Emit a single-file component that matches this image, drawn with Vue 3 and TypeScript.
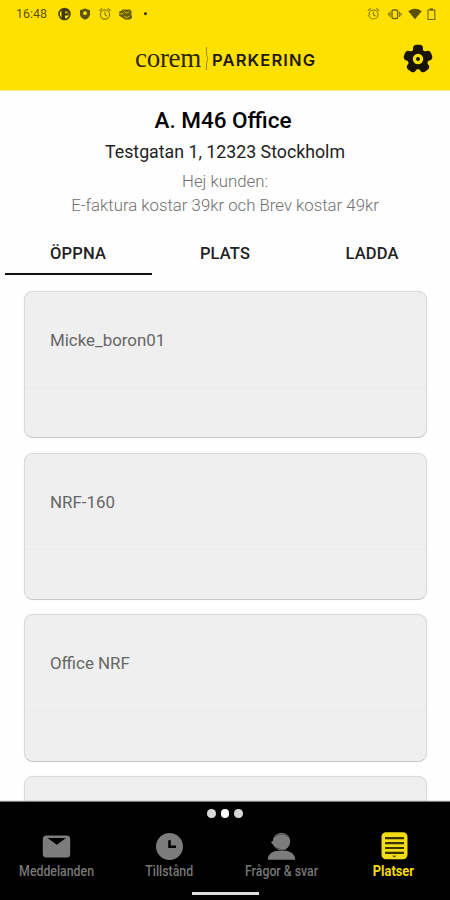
<script setup lang="ts">
interface Spot {
  name: string
}

interface NavItem {
  id: 'mail' | 'clock' | 'support' | 'list'
  label: string
}

const tabs: string[] = ['ÖPPNA', 'PLATS', 'LADDA']
const activeTab = 'ÖPPNA'
const spots: Spot[] = [{ name: 'Micke_boron01' }, { name: 'NRF-160' }, { name: 'Office NRF' }, { name: '' }]
const navItems: NavItem[] = [
  { id: 'mail', label: 'Meddelanden' },
  { id: 'clock', label: 'Tillstånd' },
  { id: 'support', label: 'Frågor & svar' },
  { id: 'list', label: 'Platser' },
]
const activeNav = 'list'
</script>

<template>
  <div class="screen">
    <header class="header">
      <div class="status">
        <span class="time">16:48</span>
        <svg class="s-icons-left" width="92" height="16" viewBox="0 0 92 16">
          <circle cx="6.5" cy="8" r="5.5" fill="none" stroke="#4a4208" stroke-width="1.6" />
          <path d="M3.5 3.2v9.5l3.5 1V9.5h3.7V4.5L8 2.8z" fill="#3f3807" />
          <path d="M7 5.3h2.5v2.2H7z" fill="#c9b406" />
          <path d="M27 2.5l5 1.7v4c0 2.5-2 4.4-5 5.6-3-1.2-5-3.1-5-5.6v-4z" fill="#5d520a" />
          <circle cx="27" cy="7.2" r="1.9" fill="#ffe100" />
          <g fill="none" stroke="#8a7a08" stroke-width="1.2">
            <circle cx="47" cy="8.5" r="4.6" />
            <path d="M41.3 4.8l3-2.4M52.7 4.8l-3-2.4M47 5.8v2.8l2 1.6" />
          </g>
          <path d="M61 6l4-2.5h7l2 2.5-1 2 1 2v2l-2 1.5h-5l-6-4z" fill="#6b5f0a" />
          <path d="M60.5 7.8h5M66 5.2l2.5 2 3-1.8M66 10.5l3 1 2.5-1.5" fill="none" stroke="#d4bf06" stroke-width="1" />
          <circle cx="87.5" cy="7.7" r="1.6" fill="#4a4208" />
        </svg>
        <svg class="s-icons-right" width="70" height="16" viewBox="0 0 70 16">
          <g fill="none" stroke="#8a7a08" stroke-width="1.2">
            <circle cx="6.5" cy="8.5" r="4.5" />
            <path d="M.8 4.8l3-2.4M12.2 4.8l-3-2.4M6.5 5.8v2.8l2 1.6" />
          </g>
          <rect x="25" y="4" width="5.6" height="8.5" rx="1.2" fill="none" stroke="#746706" stroke-width="1.4" />
          <path d="M23 5.5v5.5M32.6 5.5v5.5M21.5 7v2.5M34.1 7v2.5" stroke="#8a7a08" stroke-width="1.2" />
          <path d="M41.3 5.2q6.7-4.8 13.4 0L48 13.3z" fill="#5a4f05" />
          <path d="M61 4h6.8v9.5H61z" fill="none" stroke="#7c6e08" stroke-width="1.2" />
          <path d="M62.5 2.5h3.7v1.7h-3.7z" fill="#5a4f05" />
        </svg>
      </div>
      <div class="brand-row">
        <div class="brand">
          <span class="corem">corem</span>
          <svg class="brand-bar" width="5" height="26" viewBox="0 0 5 26">
            <path d="M1.5 1v7q2.5 4.5 0 9v7" fill="none" stroke="#a08e08" stroke-width="1" />
          </svg>
          <span class="parkering">PARKERING</span>
        </div>
        <svg class="gear" width="30" height="30" viewBox="-15 -15 30 30">
          <g fill="#171402">
            <circle r="10.3" />
            <rect v-for="n in 5" :key="n" x="-5" y="-14.3" width="10" height="10" rx="3.5" :transform="`rotate(${(n - 1) * 72})`" />
          </g>
          <circle r="3.6" fill="#171402" stroke="#ffe100" stroke-width="3.2" />
        </svg>
      </div>
    </header>

    <main class="content">
      <section class="intro">
        <h1 class="title">A. M46 Office</h1>
        <p class="address">Testgatan 1, 12323 Stockholm</p>
        <p class="note">Hej kunden:<br />E-faktura kostar 39kr och Brev kostar 49kr</p>
      </section>

      <div class="tabs">
        <div v-for="tab in tabs" :key="tab" class="tab" :class="{ active: tab === activeTab }">{{ tab }}</div>
      </div>

      <div class="cards">
        <article v-for="(spot, i) in spots" :key="i" class="card">
          <div class="card-head">{{ spot.name }}</div>
        </article>
      </div>
    </main>

    <footer class="footer">
      <div class="dots"><i></i><i class="mid"></i><i></i></div>
      <nav class="nav">
        <div v-for="item in navItems" :key="item.id" class="nav-item" :class="[item.id, { active: item.id === activeNav }]">
          <svg width="30" height="30" viewBox="0 0 30 30">
            <template v-if="item.id === 'mail'">
              <rect x="1.8" y="4.5" width="27.4" height="22" rx="3.5" fill="#7c7c7c" />
              <path d="M6.5 7h18.5l-9.2 6.7z" fill="#000" />
            </template>
            <template v-else-if="item.id === 'clock'">
              <circle cx="15.5" cy="15.5" r="13.5" fill="#7c7c7c" />
              <path d="M15.5 9.2v6.5h6.5" fill="none" stroke="#000" stroke-width="2.6" />
            </template>
            <template v-else-if="item.id === 'support'">
              <path d="M1.8 28.7c0-6 5-9.2 13.7-9.2s13.7 3.2 13.7 9.2z" fill="#7c7c7c" />
              <ellipse cx="15.5" cy="10.5" rx="8.7" ry="8.7" fill="#7c7c7c" />
              <path d="M9 5.5q6.5-5 13 0M6.5 13.5q2.5 4.5 9 5.3h5" fill="none" stroke="#4c4c4c" stroke-width="1" />
              <path d="M4.8 11.5l3-2.5v5z" fill="#7c7c7c" />
            </template>
            <template v-else>
              <rect x="2.5" y="1.3" width="26" height="27" rx="4.5" fill="#f1dc16" />
              <path d="M6 7.2h19M6 12.1h19M6 17h19M6 21.9h19" stroke="#3b3400" stroke-width="2.2" />
              <path d="M13 24.8h4.5l-2.2 1.5z" fill="#2b2600" />
            </template>
          </svg>
          <span class="label">{{ item.label }}</span>
        </div>
      </nav>
      <div class="home"></div>
    </footer>
  </div>
</template>

<style>
body {
  margin: 0;
  background: #fff;
}
</style>

<style scoped>
.screen {
  width: 450px;
  height: 900px;
  display: flex;
  flex-direction: column;
  overflow: hidden;
  background: #fefefe;
  font-family: Roboto, 'Liberation Sans', sans-serif;
  color: #111;
}
.header {
  flex: none;
  height: 90px;
  background: #ffe100;
  border-bottom: 1px solid #f5eb9a;
}
.status {
  display: flex;
  align-items: center;
  height: 28px;
  padding: 0 13px 0 16px;
}
.time {
  width: 42px;
  font-size: 12.5px;
  line-height: 28px;
  color: #5d520a;
  white-space: nowrap;
}
.s-icons-left {
  margin-top: -1px;
}
.s-icons-right {
  margin: -1px 0 0 auto;
}
.brand-row {
  display: grid;
  grid-template-columns: 135px 1fr 30px;
  align-items: center;
  height: 62px;
  padding-right: 17px;
}
.brand {
  grid-column: 2;
  display: flex;
  align-items: center;
}
.corem {
  width: 70px;
  font-family: 'Liberation Serif', serif;
  font-size: 27px;
  line-height: 30px;
  letter-spacing: -0.3px;
  color: #2b2600;
  margin-top: -3px;
}
.brand-bar {
  margin-right: 2px;
}
.parkering {
  font-family: Inter, Roboto, sans-serif;
  font-weight: 600;
  font-size: 16.5px;
  line-height: 20px;
  letter-spacing: 1.15px;
  color: #1d1900;
  margin-top: 2px;
}
.content {
  flex: 1;
  min-height: 0;
  overflow: hidden;
}
.intro {
  text-align: center;
  padding-top: 14px;
}
.title {
  margin: 0;
  font-size: 22.5px;
  line-height: 30px;
  font-weight: 500;
  text-indent: -4px;
  color: #000;
}
.address {
  margin: 0;
  padding-top: 4px;
  font-size: 17.75px;
  line-height: 26px;
  color: #222;
}
.note {
  margin: 0;
  padding-top: 4px;
  font-size: 16.8px;
  line-height: 24px;
  font-weight: 300;
  color: #707070;
}
.tabs {
  display: grid;
  grid-template-columns: repeat(3, 147px);
  justify-content: center;
  margin-top: 16px;
}
.tab {
  box-sizing: border-box;
  height: 42px;
  padding-top: 1px;
  line-height: 40px;
  text-align: center;
  font-size: 16.5px;
  font-weight: 500;
  letter-spacing: 0.15px;
  color: #222;
  border-bottom: 2px solid transparent;
}
.tab.active {
  border-bottom-color: #111;
}
.cards {
  display: flex;
  flex-direction: column;
  gap: 14.5px;
  padding: 16px 23px 0 23.5px;
}
.card {
  flex: none;
  box-sizing: border-box;
  height: 147.2px;
  background: #efefef;
  border: 1px solid #dadada;
  border-bottom-color: #c8c8c8;
  border-radius: 9px;
  box-shadow: 0 0 1px #d0d0d0;
}
.card-head {
  height: 95px;
  padding-left: 25.5px;
  line-height: 97px;
  font-size: 16.9px;
  color: #666;
  border-bottom: 1px solid #eaeaea;
}
.footer {
  flex: none;
  height: 98.5px;
  background: #000;
  box-shadow: 0 -1px 1px #777;
  display: flex;
  flex-direction: column;
  align-items: center;
}
.dots {
  display: flex;
  align-items: center;
  justify-content: center;
  gap: 5px;
  height: 24px;
}
.dots i {
  width: 8.5px;
  height: 8.5px;
  border-radius: 50%;
  background: #d8d8d8;
}
.dots .mid {
  background: #fff;
}
.nav {
  width: 450px;
  display: grid;
  grid-template-columns: repeat(4, 1fr);
  height: 66.5px;
}
.nav-item {
  display: flex;
  flex-direction: column;
  align-items: center;
  padding-top: 5.5px;
  color: #777;
}
.label {
  font-size: 14px;
  line-height: 20px;
  font-weight: 500;
  white-space: nowrap;
  transform: scaleX(0.88);
}
.nav-item.active {
  color: #f4dc00;
}
.nav-item.active .label {
  font-weight: 700;
  transform: scaleX(0.92);
}
.home {
  width: 67px;
  height: 3px;
  background: #dedede;
}
</style>
